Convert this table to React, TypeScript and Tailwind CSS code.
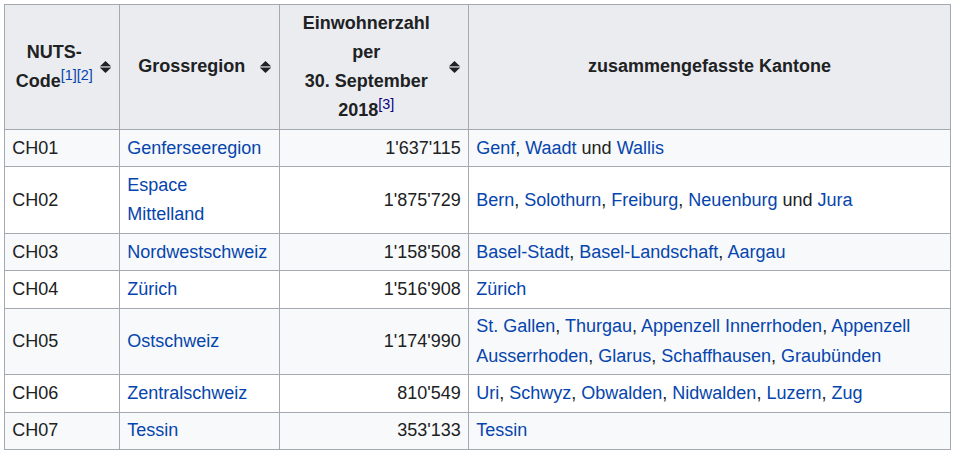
import React from "react"

// ── Data ──────────────────────────────────────────────────────────────────────

type Part = { text: string; link?: boolean }

type Row = {
  code: string
  region: string[]
  population: string
  cantons: Part[][]
}

const L = (text: string): Part => ({ text, link: true })
const T = (text: string): Part => ({ text })

const ROWS: Row[] = [
  {
    code: "CH01",
    region: ["Genferseeregion"],
    population: "1'637'115",
    cantons: [[L("Genf"), T(", "), L("Waadt"), T(" und "), L("Wallis")]],
  },
  {
    code: "CH02",
    region: ["Espace", "Mittelland"],
    population: "1'875'729",
    cantons: [
      [
        L("Bern"), T(", "), L("Solothurn"), T(", "), L("Freiburg"), T(", "),
        L("Neuenburg"), T(" und "), L("Jura"),
      ],
    ],
  },
  {
    code: "CH03",
    region: ["Nordwestschweiz"],
    population: "1'158'508",
    cantons: [[L("Basel-Stadt"), T(", "), L("Basel-Landschaft"), T(", "), L("Aargau")]],
  },
  {
    code: "CH04",
    region: ["Zürich"],
    population: "1'516'908",
    cantons: [[L("Zürich")]],
  },
  {
    code: "CH05",
    region: ["Ostschweiz"],
    population: "1'174'990",
    cantons: [
      [L("St. Gallen"), T(", "), L("Thurgau"), T(", "), L("Appenzell Innerrhoden"), T(", "), L("Appenzell")],
      [L("Ausserrhoden"), T(", "), L("Glarus"), T(", "), L("Schaffhausen"), T(", "), L("Graubünden")],
    ],
  },
  {
    code: "CH06",
    region: ["Zentralschweiz"],
    population: "810'549",
    cantons: [
      [
        L("Uri"), T(", "), L("Schwyz"), T(", "), L("Obwalden"), T(", "), L("Nidwalden"), T(", "),
        L("Luzern"), T(", "), L("Zug"),
      ],
    ],
  },
  {
    code: "CH07",
    region: ["Tessin"],
    population: "353'133",
    cantons: [[L("Tessin")]],
  },
]

// ── Bits ─────────────────────────────────────────────────────────────────────

function SortIcon() {
  return (
    <svg width="11" height="12" viewBox="0 0 11 12" className="shrink-0 ml-[3px] mr-[1.5px]">
      <polygon points="0,5.2 5.5,0 11,5.2" fill="#202122" />
      <rect x="0" y="5.2" width="11" height="1.6" fill="#9a9ea4" />
      <polygon points="0,6.8 5.5,12 11,6.8" fill="#202122" />
    </svg>
  )
}

function Ref({ n, visited }: { n: string; visited?: boolean }) {
  return (
    <sup className={`text-[14.4px] font-normal leading-none ${visited ? "text-[#0b0080]" : "text-[#0645ad]"}`}>
      [{n}]
    </sup>
  )
}

const headCell =
  "border border-[#a2a9b1] bg-[#eaecf0] px-[7px] py-[3.6px] align-middle font-bold leading-[29.2px]"

function Header({ children }: { children: React.ReactNode }) {
  return (
    <th className={headCell}>
      <div className="flex items-center">
        <div className="flex-1 text-center">{children}</div>
        <SortIcon />
      </div>
    </th>
  )
}

const cell = "border border-[#a2a9b1] px-[7.2px] py-[3.6px] align-middle leading-[29.2px]"

// ── Page ─────────────────────────────────────────────────────────────────────

export default function App() {
  return (
    <div className="bg-white min-h-[455px] p-1 font-['Liberation_Sans',Arial,sans-serif] text-[18px] text-[#202122]">
      <table className="w-[946px] table-fixed border-collapse border border-[#a2a9b1]">
        <colgroup>
          <col className="w-[115px]" />
          <col className="w-[160px]" />
          <col className="w-[189px]" />
          <col className="w-[482px]" />
        </colgroup>
        <thead>
          <tr>
            <Header>
              NUTS-
              <br />
              Code
              <Ref n="1" />
              <Ref n="2" />
            </Header>
            <Header>Grossregion</Header>
            <Header>
              Einwohnerzahl
              <br />
              per
              <br />
              30. September
              <br />
              2018
              <Ref n="3" visited />
            </Header>
            <th className={`${headCell} text-center`}>zusammengefasste Kantone</th>
          </tr>
        </thead>
        <tbody>
          {ROWS.map((row, i) => (
            <tr key={row.code} className={i % 2 === 0 ? "bg-[#f8f9fa]" : "bg-white"}>
              <td className={cell}>{row.code}</td>
              <td className={`${cell} text-[#0645ad]`}>
                {row.region.map((line, j) => (
                  <div key={j}>{line}</div>
                ))}
              </td>
              <td className={`${cell} text-right`}>{row.population}</td>
              <td className={cell}>
                {row.cantons.map((line, j) => (
                  <div key={j} className="whitespace-nowrap">
                    {line.map((p, k) =>
                      p.link ? (
                        <a key={k} href="#" className="text-[#0645ad]">
                          {p.text}
                        </a>
                      ) : (
                        <span key={k}>{p.text}</span>
                      )
                    )}
                  </div>
                ))}
              </td>
            </tr>
          ))}
        </tbody>
      </table>
    </div>
  )
}
